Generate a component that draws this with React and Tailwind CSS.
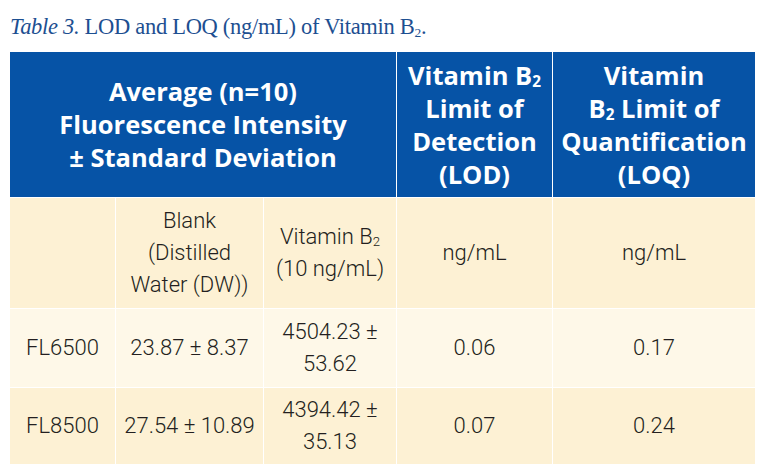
import React from 'react';

const head = "font-['Open_Sans','Noto_Sans',sans-serif] font-bold text-white text-[25.5px] leading-[33px]";
const body = "font-['Roboto',sans-serif] font-light text-[#231f20] text-[22px] leading-[32px]";

function B2() {
  return (
    <>
      B<sub className="text-[0.6em] relative top-[0.15em]">2</sub>
    </>
  );
}

function Cell({ children, tone = 'bg-[#fdf1d4]', className = '' }) {
  return (
    <div className={`flex items-center justify-center text-center ${tone} ${className}`}>
      {children}
    </div>
  );
}

const rows = [
  ['FL6500', '23.87 ± 8.37', ['4504.23 ±', '53.62'], '0.06', '0.17', 'bg-[#fef8e8]'],
  ['FL8500', '27.54 ± 10.89', ['4394.42 ±', '35.13'], '0.07', '0.24', 'bg-[#fdf1d4]'],
];

export default function App() {
  return (
    <div className="w-[760px] h-[472px] bg-white overflow-hidden pt-[14px] pl-[10px]">
      {/* caption */}
      <p className="font-['Liberation_Serif',serif] text-[#1d4f91] text-[22.5px] leading-[26px] tracking-[-0.3px]">
        <i>Table 3.</i> LOD and LOQ (ng/mL) of Vitamin B<sub className="text-[0.6em]">2</sub>.
      </p>

      <div className="mt-[12px] w-[745px] grid grid-cols-[105px_147px_132px_155px_202px] grid-rows-[145px_110px_78px_76px] gap-px bg-white">
        {/* header */}
        <Cell tone="bg-[#0653a6]" className={`col-span-3 ${head}`}>
          <div>
            Average (n=10)
            <br />
            Fluorescence Intensity
            <br />± Standard Deviation
          </div>
        </Cell>
        <Cell tone="bg-[#0653a6]" className={head}>
          <div>
            Vitamin <B2 />
            <br />
            Limit of
            <br />
            Detection
            <br />
            (LOD)
          </div>
        </Cell>
        <Cell tone="bg-[#0653a6]" className={head}>
          <div>
            Vitamin
            <br />
            <B2 /> Limit of
            <br />
            Quantification
            <br />
            (LOQ)
          </div>
        </Cell>

        {/* units row */}
        <Cell className={body} />
        <Cell className={body}>
          <div>
            Blank
            <br />
            (Distilled
            <br />
            Water (DW))
          </div>
        </Cell>
        <Cell className={body}>
          <div>
            Vitamin <B2 />
            <br />
            (10 ng/mL)
          </div>
        </Cell>
        <Cell className={body}>ng/mL</Cell>
        <Cell className={body}>ng/mL</Cell>

        {rows.map(([name, blank, vit, lod, loq, tone]) => (
          <React.Fragment key={name}>
            <Cell tone={tone} className={body}>{name}</Cell>
            <Cell tone={tone} className={body}>{blank}</Cell>
            <Cell tone={tone} className={`${body} leading-[30px]`}>
              <div>
                {vit[0]}
                <br />
                {vit[1]}
              </div>
            </Cell>
            <Cell tone={tone} className={body}>{lod}</Cell>
            <Cell tone={tone} className={body}>{loq}</Cell>
          </React.Fragment>
        ))}
      </div>
    </div>
  );
}
